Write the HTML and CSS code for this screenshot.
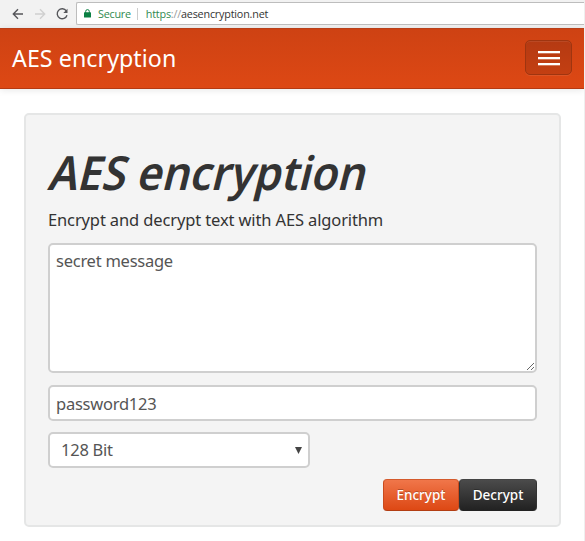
FILE: index.html
```html
<!DOCTYPE html>
<html lang="en">
<head>
<meta charset="utf-8">
<title>AES encryption</title>
<link rel="stylesheet" href="styles.css">
</head>
<body>
<div class="toolbar">
  <svg class="nav-icons" width="76" height="28" viewBox="0 0 76 28" fill="none" stroke-width="1.4">
    <path d="M23 14H13.5M18 9.3L13.3 14L18 18.7" stroke="#55565a"/>
    <path d="M35 14H44.5M40 9.3L44.7 14L40 18.7" stroke="#d0d0d0"/>
    <path d="M66.3 10.8A5 5 0 1 0 67 15.2" stroke="#55565a"/>
    <path d="M67.5 8.8V13H63.3Z" fill="#55565a"/>
  </svg>
  <div class="omnibox">
    <svg class="lock" width="7" height="9" viewBox="0 0 7 9"><path d="M1.7 4V2.4a1.8 1.8 0 0 1 3.6 0V4" fill="none" stroke="#0b8043"/><rect y="3.3" width="7" height="5.2" rx=".6" fill="#0b8043"/></svg>
    <span class="secure">Secure</span>
    <span class="divider"></span>
    <span class="url"><span class="scheme">https</span><span class="slashes">://</span>aesencryption.net</span>
  </div>
</div>
<header class="navbar">
  <a class="brand">AES encryption</a>
  <button class="toggle" aria-label="Menu"><i></i><i></i><i></i></button>
</header>
<main class="well">
  <h1><span class="title">AES encryption</span></h1>
  <p><span class="lead">Encrypt and decrypt text with AES algorithm</span></p>
  <textarea class="field message" spellcheck="false">secret message</textarea>
  <input class="field password" type="text" value="password123" spellcheck="false">
  <div class="field select"><span class="option">128 Bit</span><svg width="7" height="7" viewBox="0 0 7 7"><path d="M0 0H7L3.5 7Z" fill="#444"/></svg></div>
  <div class="actions">
    <button class="btn primary">Encrypt</button>
    <button class="btn dark">Decrypt</button>
  </div>
</main>
</body>
</html>
```
FILE: styles.css
```css
* { box-sizing: border-box; }
body {
  margin: 0;
  height: 541px;
  overflow: hidden;
  background: #fff;
  border-right: 1px solid #efefef;
  font-family: "Noto Sans", sans-serif;
  color: #333;
}
.toolbar {
  display: flex;
  height: 28px;
  margin-right: -1px;
  background: #f2f2f2;
}
.nav-icons { flex: none; }
.omnibox {
  display: flex;
  align-items: center;
  flex: 1;
  height: 23px;
  margin-top: 2px;
  padding-left: 7px;
  background: #fff;
  border: 1px solid #bdbdbd;
  border-right: 0;
  border-radius: 2px 0 0 2px;
  font: 10.8px "Open Sans", sans-serif;
  white-space: nowrap;
}
.secure { margin-left: 7px; color: #2f8a50; letter-spacing: -0.25px; }
.divider { width: 1px; height: 12px; margin: 0 8px 0 6px; background: #ccc; }
.url { color: #333; letter-spacing: -0.2px; }
.scheme { color: #2f8a50; }
.slashes { color: #999; }
.navbar {
  display: flex;
  align-items: center;
  justify-content: space-between;
  height: 61px;
  padding: 0 12px;
  background: linear-gradient(#ce4213, #dd4814);
  border-top: 1px solid #b9401a;
  border-bottom: 1px solid #b53a12;
  box-shadow: 0 1px 7px rgba(0, 0, 0, .1);
}
.brand {
  margin-top: -2px;
  color: #fff;
  font-size: 23.2px;
  line-height: 30px;
  letter-spacing: 0.07px;
}
.toggle {
  display: flex;
  flex-direction: column;
  align-items: center;
  justify-content: center;
  gap: 4px;
  width: 47px;
  height: 35px;
  margin-top: -2px;
  padding: 1px 0 0;
  background: linear-gradient(#b53a12, #c33f12);
  border: 1px solid #9f3510;
  border-radius: 5px;
  box-shadow: inset 0 1px 0 rgba(255, 255, 255, .08), 0 1px 0 rgba(255, 255, 255, .08);
}
.toggle i {
  width: 22px;
  height: 2px;
  background: #fff;
  box-shadow: 0 1px 0 rgba(255, 255, 255, .3);
}
.well {
  display: flex;
  flex-direction: column;
  width: 537px;
  height: 414px;
  margin: 24px 0 0 24px;
  padding: 31px 22px 0;
  background: #f4f4f4;
  border: 2px solid #e5e6e6;
  border-radius: 5px;
}
h1 {
  margin: 0;
  font-size: 47px;
  font-weight: 600;
  line-height: 52px;
  white-space: nowrap;
}
.title {
  display: inline-block;
  transform: skewX(-14deg) scaleX(.922);
  transform-origin: 0 76%;
}
p {
  margin: 10px 0 11px;
  font-size: 16.5px;
  line-height: 24px;
  letter-spacing: -0.13px;
  white-space: nowrap;
}
.field {
  display: block;
  width: 489px;
  margin: 0;
  background: #fff;
  border: 2px solid #cfcfcf;
  border-radius: 5px;
  outline: 0;
  color: #555;
  font: 16.5px/24px "Noto Sans", sans-serif;
  letter-spacing: -0.25px;
}
.message { height: 130px; padding: 4px 6px; resize: vertical; }
.password { height: 36px; margin-top: 12px; padding: 4px 6px; }
.select {
  display: flex;
  align-items: center;
  justify-content: space-between;
  width: 262px;
  height: 36px;
  margin-top: 11px;
  padding: 0 6px 0 11px;
}
.actions { display: flex; justify-content: flex-end; margin-top: 11px; }
.btn {
  width: 77px;
  height: 32px;
  padding: 0;
  border: 1px solid;
  border-radius: 4px;
  color: #fff;
  font: 500 13.5px/20px "Noto Sans", sans-serif;
  text-shadow: 0 -1px 0 rgba(0, 0, 0, .25);
}
.primary { background: linear-gradient(#f0764a, #dd4814); border-color: #d45a2c #c94a1c #b23d13; }
.dark { width: 78px; background: linear-gradient(#4b4b4b, #222); border-color: #444 #333 #222; }
.primary { width: 76px; }
```
